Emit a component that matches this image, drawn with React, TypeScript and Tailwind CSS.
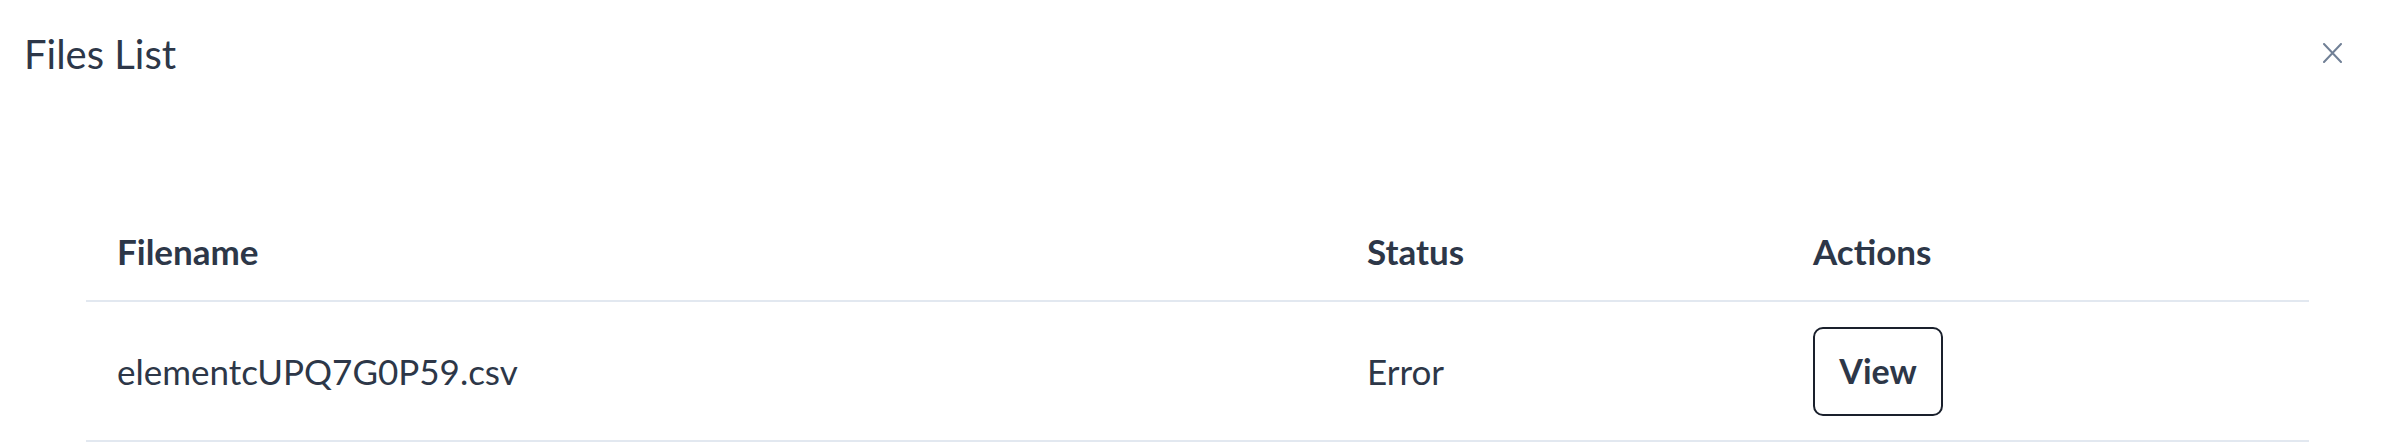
import React from "react";

export default function App() {
  return (
    <div
      className="relative w-full h-[446px] bg-white overflow-hidden text-[#2d3748]"
      style={{ fontFamily: "Lato, 'Open Sans', sans-serif" }}
    >
      <header className="pl-6 pt-[30px] h-[202px]">
        <h2 className="text-[40px] leading-[1.2] font-normal">Files List</h2>
      </header>
      <button
        aria-label="Close"
        className="absolute top-[43px] right-[60px] w-[19px] h-[20px] flex items-center justify-center"
      >
        <svg width="19" height="20" viewBox="0 0 19 20" fill="none">
          <path d="M1 1L18 19M18 1L1 19" stroke="#718096" strokeWidth="2" strokeLinecap="round" />
        </svg>
      </button>
      <div className="ml-[86px] mr-[93px]">
        <table className="w-full border-collapse table-fixed">
          <colgroup>
            <col className="w-[1250px]" />
            <col className="w-[446px]" />
            <col />
          </colgroup>
          <thead>
            <tr className="border-b-2 border-[#e2e8f0]">
              <th className="text-left font-bold text-[35px] leading-[1.2] pl-[31px] pt-[28px] pb-[28px]">Filename</th>
              <th className="text-left font-bold text-[35px] leading-[1.2] pl-[31px] pt-[28px] pb-[28px]">Status</th>
              <th className="text-left font-bold text-[35px] leading-[1.2] pl-[31px] pt-[28px] pb-[28px]">Actions</th>
            </tr>
          </thead>
          <tbody>
            <tr className="border-b-2 border-[#e2e8f0] h-[140px]">
              <td className="text-[35px] leading-[1.2] pl-[31px] align-middle">elementcUPQ7G0P59.csv</td>
              <td className="text-[35px] leading-[1.2] pl-[31px] align-middle">Error</td>
              <td className="pl-[31px] align-middle">
                <button className="w-[130px] h-[89px] border-2 border-[#1a202c] rounded-[10px] text-[34px] font-bold leading-none flex items-center justify-center text-[#2d3748]">
                  View
                </button>
              </td>
            </tr>
          </tbody>
        </table>
      </div>
    </div>
  );
}
